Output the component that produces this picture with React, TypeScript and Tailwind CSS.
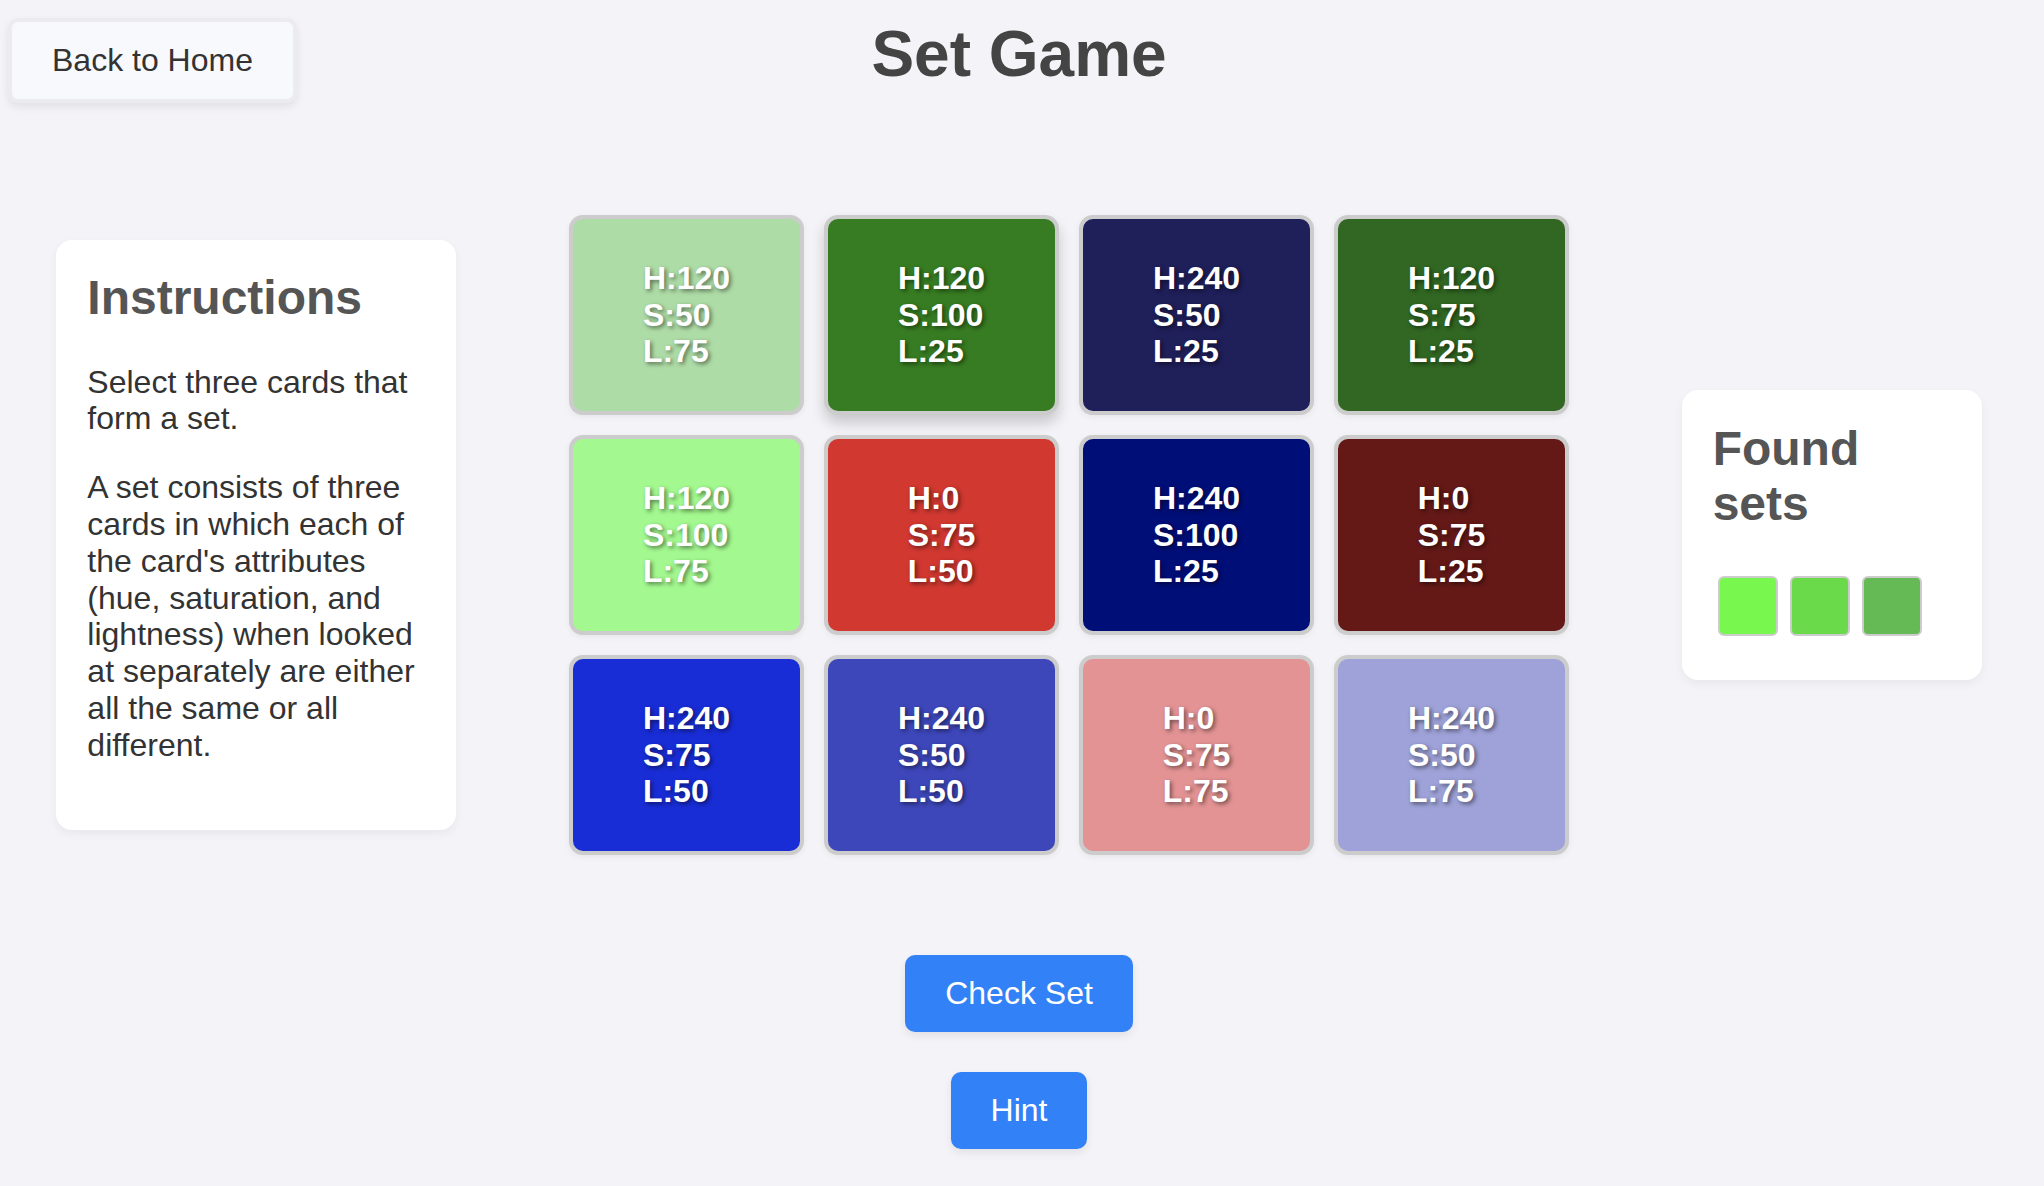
import React from "react";

type Card = { h: number; s: number; l: number; color: string; raised?: boolean };

const cards: Card[] = [
  { h: 120, s: 50, l: 75, color: "#AEDCA6" },
  { h: 120, s: 100, l: 25, color: "#377C22", raised: true },
  { h: 240, s: 50, l: 25, color: "#1F1F5A" },
  { h: 120, s: 75, l: 25, color: "#316722" },
  { h: 120, s: 100, l: 75, color: "#A3F88F" },
  { h: 0, s: 75, l: 50, color: "#D03830" },
  { h: 240, s: 100, l: 25, color: "#000E78" },
  { h: 0, s: 75, l: 25, color: "#641917" },
  { h: 240, s: 75, l: 50, color: "#182DD6" },
  { h: 240, s: 50, l: 50, color: "#3D47BA" },
  { h: 0, s: 75, l: 75, color: "#E39394" },
  { h: 240, s: 50, l: 75, color: "#9EA2D8" },
];

const found = ["#78F84E", "#6BDA4A", "#66BA55"];

export default function App() {
  return (
    <div className="w-full min-h-screen bg-[#f4f4f8] font-['Liberation_Sans',Arial,sans-serif]">
      <div className="relative w-[2038px] pb-[37px]">
        <button className="absolute left-[8px] top-[18px] border-4 border-[#ececf0] bg-[#f8f9fc] px-[40px] py-[20px] rounded-[10px] text-[#333] text-[32px] leading-[36.8px] shadow-[0_4px_8px_rgba(0,0,0,0.08)]">
          Back to Home
        </button>
        <h1 className="pt-[18px] text-center text-[64px] leading-[73.6px] font-bold text-[#444]">
          Set Game
        </h1>

        <div className="mt-[123.4px] flex items-center justify-around">
          <div className="w-[400px] bg-white rounded-[16px] pl-[31px] pr-[32px] pt-[30px] pb-[34px] shadow-[0_4px_10px_rgba(0,0,0,0.05)]">
            <h2 className="text-[48px] leading-[55.2px] font-bold text-[#555]">Instructions</h2>
            <p className="mt-[38px] text-[32px] leading-[36.8px] text-[#333]">
              Select three cards that form a set.
            </p>
            <p className="mt-[32px] mb-[32px] text-[32px] leading-[36.8px] text-[#333]">
              A set consists of three cards in which each of the card's attributes (hue, saturation, and lightness) when looked at separately are either all the same or all different.
            </p>
          </div>

          <div className="grid grid-cols-[repeat(4,235px)] gap-[20px]">
            {cards.map((c, i) => (
              <div
                key={i}
                className={
                  "w-[235px] h-[200px] border-4 border-[#cccccc] rounded-[14px] flex items-center justify-center " +
                  (c.raised
                    ? "shadow-[0_8px_14px_rgba(0,0,0,0.18)]"
                    : "shadow-[0_2px_6px_rgba(0,0,0,0.06)]")
                }
                style={{ backgroundColor: c.color }}
              >
                <div className="text-left font-bold text-white text-[32px] leading-[36.8px] [text-shadow:2px_2px_4px_rgba(0,0,0,0.5)]">
                  <div>H:{c.h}</div>
                  <div>S:{c.s}</div>
                  <div>L:{c.l}</div>
                </div>
              </div>
            ))}
          </div>

          <div className="w-[300px] bg-white rounded-[16px] pl-[31px] pr-[32px] pt-[31px] pb-[44px] shadow-[0_4px_10px_rgba(0,0,0,0.05)]">
            <h2 className="text-[48px] leading-[55.2px] font-bold text-[#555]">Found sets</h2>
            <div className="mt-[44.6px] pl-[5px] flex gap-[12px]">
              {found.map((f, i) => (
                <div
                  key={i}
                  className="w-[60px] h-[60px] border-2 border-[#cccccc] rounded-[6px]"
                  style={{ backgroundColor: f }}
                />
              ))}
            </div>
          </div>
        </div>

        <div className="mt-[100px] flex flex-col items-center gap-[40px]">
          <button className="bg-[#3381f6] text-white text-[32px] leading-[36.8px] px-[40px] py-[20px] rounded-[10px] shadow-[0_4px_8px_rgba(0,0,0,0.08)]">
            Check Set
          </button>
          <button className="bg-[#3381f6] text-white text-[32px] leading-[36.8px] px-[40px] py-[20px] rounded-[10px] shadow-[0_4px_8px_rgba(0,0,0,0.08)]">
            Hint
          </button>
        </div>
      </div>
    </div>
  );
}
